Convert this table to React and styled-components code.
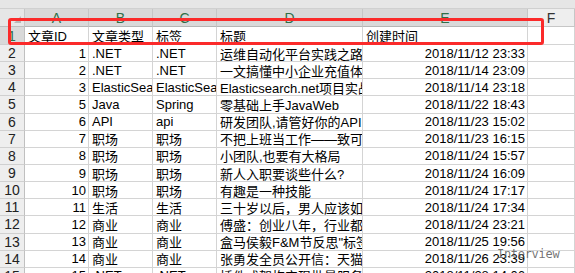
import React from "react";
import styled, { createGlobalStyle } from "styled-components";

const Global = createGlobalStyle`
  html, body { margin: 0; padding: 0; background: #fff; overflow: hidden; }
  body { font-family: "Liberation Sans", "Noto Sans CJK SC", sans-serif; }
`;

const Wrap = styled.div`
  position: relative;
  width: 575px;
  height: 273px;
  overflow: hidden;
  background: #fff;
`;

const TopStrip = styled.div`
  height: 8px;
  background: #e6e6e6;
  border-bottom: 1px solid #d0d0d0;
`;

const Sheet = styled.div`
  display: grid;
  grid-template-columns: 25px 64px 64px 64px 146px 165px 1fr;
  grid-template-rows: 18px 18px;
  grid-auto-rows: 17.15px;
`;

const Corner = styled.div`
  position: relative;
  background: #e6e6e6;
  border-right: 1px solid #c6c6c6;
  border-bottom: 1px solid #bdbdbd;
  &::after {
    content: "";
    position: absolute;
    right: 3px;
    bottom: 3px;
    width: 0;
    height: 0;
    border-left: 7px solid transparent;
    border-bottom: 7px solid #b8b8b8;
  }
`;

const ColHead = styled.div`
  display: flex;
  align-items: center;
  justify-content: center;
  background: ${(p) => (p.$sel ? "#d9d9d9" : "#eeeeee")};
  border-right: 1px solid #c6c6c6;
  border-bottom: 1px solid ${(p) => (p.$sel ? "#b5b5b5" : "#c6c6c6")};
  color: ${(p) => (p.$sel ? "#2f6f47" : "#333")};
  font-size: 14px;
  line-height: 18px;
`;

const RowHead = styled.div`
  display: flex;
  align-items: center;
  justify-content: center;
  background: ${(p) => (p.$sel ? "#d9d9d9" : "#eeeeee")};
  border-right: 1px solid #c0c0c0;
  border-bottom: 1px solid #d0d0d0;
  color: ${(p) => (p.$sel ? "#2f6f47" : "#222")};
  font-size: 14px;
  overflow: hidden;
`;

const Cell = styled.div`
  display: flex;
  align-items: center;
  justify-content: ${(p) => (p.$right ? "flex-end" : "flex-start")};
  padding: 0 2px 0 3px;
  border-right: 1px solid #d4d4d4;
  border-bottom: 1px solid #d4d4d4;
  color: #000;
  font-size: 13px;
  white-space: nowrap;
  overflow: hidden;
  min-width: 0;
`;

const RedBox = styled.div`
  position: absolute;
  left: 8px;
  top: 18px;
  width: 530px;
  height: 21px;
  border: 3px solid #fb2a2a;
  border-radius: 3px;
  pointer-events: none;
`;

const Watermark = styled.div`
  position: absolute;
  left: 497px;
  top: 247px;
  font-family: "DejaVu Sans Mono", "Liberation Mono", monospace;
  font-size: 12px;
  color: rgba(90, 90, 90, 0.85);
  letter-spacing: -0.3px;
`;

const cols = ["A", "B", "C", "D", "E", "F"];

const rows = [
  ["文章ID", "文章类型", "标签", "标题", "创建时间"],
  [1, ".NET", ".NET", "运维自动化平台实践之路", "2018/11/12 23:33"],
  [2, ".NET", ".NET", "一文搞懂中小企业充值体系", "2018/11/14 23:09"],
  [3, "ElasticSearch", "ElasticSearch", "Elasticsearch.net项目实战", "2018/11/14 23:18"],
  [5, "Java", "Spring", "零基础上手JavaWeb", "2018/11/22 18:43"],
  [6, "API", "api", "研发团队,请管好你的API", "2018/11/23 15:02"],
  [7, "职场", "职场", "不把上班当工作——致可爱的你", "2018/11/23 16:15"],
  [8, "职场", "职场", "小团队,也要有大格局", "2018/11/24 15:57"],
  [9, "职场", "职场", "新人入职要谈些什么?", "2018/11/24 16:09"],
  [10, "职场", "职场", "有趣是一种技能", "2018/11/24 17:17"],
  [11, "生活", "生活", "三十岁以后，男人应该如何", "2018/11/24 17:34"],
  [12, "商业", "商业", "傅盛：创业八年，行业都变了", "2018/11/24 23:21"],
  [13, "商业", "商业", "盒马侯毅F&M节反思\"标签\"", "2018/11/25 19:56"],
  [14, "商业", "商业", "张勇发全员公开信：天猫", "2018/11/26 23:39"],
  [15, ".NET", ".NET", "插件式架构实现批量服务", "2018/11/28 14:06"],
  [16, ".NET", ".NET", "", "2018/11/29 10:12"],
];

export default function App() {
  return (
    <>
      <Global />
      <Wrap>
        <TopStrip />
        <Sheet>
          <Corner />
          {cols.map((c) => (
            <ColHead key={c} $sel={c !== "F"}>
              {c}
            </ColHead>
          ))}
          {rows.map((r, i) => (
            <React.Fragment key={i}>
              <RowHead $sel={i === 0}>{i + 1}</RowHead>
              <Cell $right={i > 0}>{r[0]}</Cell>
              <Cell>{r[1]}</Cell>
              <Cell>{r[2]}</Cell>
              <Cell>{r[3]}</Cell>
              <Cell $right={i > 0}>{r[4]}</Cell>
              <Cell />
            </React.Fragment>
          ))}
        </Sheet>
        <RedBox />
        <Watermark>Interview</Watermark>
      </Wrap>
    </>
  );
}
